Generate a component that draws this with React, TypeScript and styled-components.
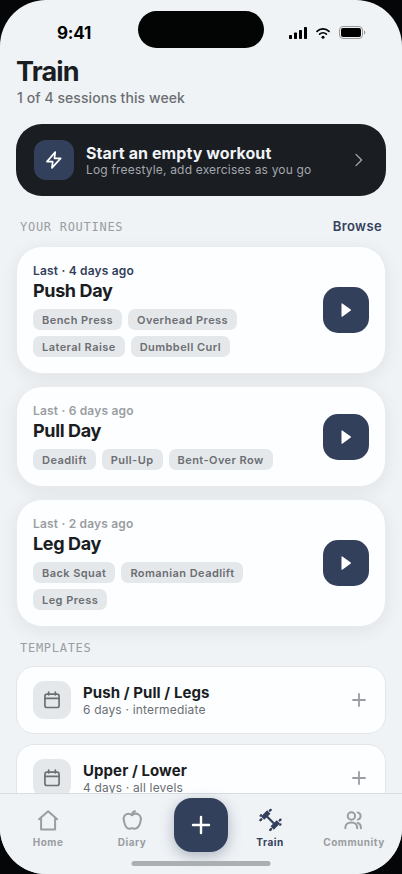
import React from 'react';
import styled, { createGlobalStyle } from 'styled-components';

const color = {
  page: '#eff3f6',
  ink: '#1a1d22',
  navy: '#33405c',
  muted: '#6b6e72',
  faint: '#9a9da1',
  chip: '#e5e8eb',
  line: '#e3e6e9',
  card: '#fdfeff',
};

const GlobalStyle = createGlobalStyle`
  *, *::before, *::after { box-sizing: border-box; }
  html, body { margin: 0; background: #050607; }
  body { font-family: Inter, "Liberation Sans", sans-serif; color: ${color.ink}; }
  h1, h2, h3, p, ul { margin: 0; padding: 0; }
  ul { list-style: none; }
  button { font: inherit; color: inherit; border: 0; padding: 0; cursor: pointer; }
  a { text-decoration: none; color: inherit; }
  svg { display: block; flex: none; }
`;

const Screen = styled.div`
  display: flex;
  flex-direction: column;
  height: 100vh;
  overflow: hidden;
  border-radius: 46px;
  background: ${color.page};
`;

const StatusBar = styled.header`
  display: grid;
  grid-template-columns: 1fr 126px 1fr;
  align-items: start;
  flex: none;
  padding-top: 11px;
  height: 56px;
`;

const Clock = styled.time`
  padding: 11px 0 0 10px;
  text-align: center;
  font-size: 17px;
  line-height: 22px;
  font-weight: 700;
  letter-spacing: -0.01em;
  color: #000;
`;

const Island = styled.div`
  height: 37px;
  border-radius: 19px;
  background: #030504;
`;

const Signals = styled.div`
  display: flex;
  align-items: center;
  gap: 8px;
  padding: 15px 0 0 25px;
`;

const Content = styled.main`
  flex: 1;
  min-height: 0;
  overflow-y: auto;
  scrollbar-width: none;
  padding: 0 16px 24px;
`;

const PageTitle = styled.h1`
  font-size: 27px;
  line-height: 32px;
  font-weight: 700;
  letter-spacing: -0.03em;
`;

const PageNote = styled.p`
  margin-top: 1px;
  padding-left: 1px;
  font-size: 14px;
  line-height: 18px;
  font-weight: 500;
  letter-spacing: 0.005em;
  color: ${color.muted};
`;

const StartButton = styled.button`
  display: flex;
  align-items: center;
  gap: 12px;
  width: 100%;
  margin-top: 17px;
  padding: 16px 18px;
  border-radius: 26px;
  background: ${color.ink};
  color: ${color.page};
  text-align: left;
`;

const StartIcon = styled.span`
  display: grid;
  place-items: center;
  width: 40px;
  height: 40px;
  border-radius: 12px;
  background: ${color.navy};
  color: #fff;
`;

const Copy = styled.span`
  display: flex;
  flex-direction: column;
  flex: 1;
  min-width: 0;
`;

const StartTitle = styled.span`
  font-size: 16px;
  line-height: 20px;
  font-weight: 700;
  letter-spacing: 0.005em;
`;

const StartNote = styled.span`
  font-size: 12px;
  line-height: 14px;
  letter-spacing: 0.015em;
  color: #a3a7ad;
`;

const SectionHead = styled.div<{ $top: number }>`
  display: flex;
  align-items: center;
  justify-content: space-between;
  margin-top: ${(p) => p.$top}px;
  padding: 0 4px;
  min-height: 20px;
`;

const SectionTitle = styled.h2`
  padding-top: 2px;
  font-family: "DejaVu Sans Mono", monospace;
  font-size: 12px;
  line-height: 14px;
  font-weight: 400;
  letter-spacing: 0.06em;
  color: ${color.faint};
  text-transform: uppercase;
`;

const BrowseLink = styled.a`
  font-size: 13px;
  line-height: 16px;
  font-weight: 600;
  letter-spacing: 0.03em;
  color: ${color.navy};
`;

const List = styled.ul<{ $gap: number; $top: number }>`
  display: flex;
  flex-direction: column;
  gap: ${(p) => p.$gap}px;
  margin-top: ${(p) => p.$top}px;
`;

const RoutineCard = styled.li`
  display: flex;
  align-items: center;
  gap: 12px;
  padding: 16px;
  border: 1px solid #e9ecef;
  border-radius: 26px;
  background: ${color.card};
  box-shadow: 0 4px 18px rgba(26, 29, 34, 0.07);
`;

const RoutineBody = styled.div`
  flex: 1;
  min-width: 0;
`;

const LastDone = styled.p<{ $recent?: boolean }>`
  font-size: 12px;
  line-height: 16px;
  font-weight: 600;
  letter-spacing: 0.015em;
  color: ${(p) => (p.$recent ? color.navy : color.faint)};
`;

const RoutineName = styled.h3`
  font-size: 18px;
  line-height: 24px;
  font-weight: 700;
  letter-spacing: -0.02em;
`;

const Chips = styled.ul`
  display: flex;
  flex-wrap: wrap;
  gap: 6px;
  margin-top: 6px;
`;

const Chip = styled.li`
  padding: 1px 9px 0;
  border-radius: 7px;
  background: ${color.chip};
  font-size: 11px;
  line-height: 20px;
  font-weight: 600;
  letter-spacing: 0.04em;
  color: ${color.muted};
`;

const PlayButton = styled.button`
  display: grid;
  place-items: center;
  flex: none;
  width: 46px;
  height: 46px;
  border-radius: 15px;
  background: ${color.navy};
  color: #fff;
`;

const TemplateCard = styled.li`
  display: flex;
  align-items: center;
  gap: 12px;
  padding: 14px 16px;
  border: 1px solid ${color.line};
  border-radius: 18px;
  background: ${color.card};
`;

const TemplateIcon = styled.span`
  display: grid;
  place-items: center;
  width: 38px;
  height: 38px;
  border-radius: 11px;
  background: ${color.chip};
  color: ${color.muted};
`;

const TemplateName = styled.h3`
  font-size: 15px;
  line-height: 20px;
  font-weight: 700;
  letter-spacing: 0.005em;
`;

const TemplateNote = styled.p`
  font-size: 12px;
  line-height: 14px;
  letter-spacing: 0.015em;
  color: ${color.muted};
`;

const AddButton = styled.button`
  display: grid;
  place-items: center;
  width: 20px;
  height: 20px;
  background: none;
  color: ${color.faint};
`;

const TabBar = styled.nav`
  position: relative;
  display: grid;
  grid-template-columns: 1fr 1fr 54px 1fr 1fr;
  align-items: start;
  flex: none;
  height: 81px;
  padding: 4px 6px 0;
  border-top: 1px solid #d9dde2;
  background: ${color.page};
`;

const Tab = styled.a<{ $active?: boolean }>`
  display: flex;
  flex-direction: column;
  align-items: center;
  gap: 3px;
  padding-top: 10px;
  font-size: 10px;
  line-height: 14px;
  font-weight: 700;
  letter-spacing: 0.05em;
  color: ${(p) => (p.$active ? color.navy : color.faint)};
`;

const NewButton = styled.button`
  display: grid;
  place-items: center;
  width: 54px;
  height: 54px;
  border-radius: 18px;
  background: ${color.navy};
  color: #fff;
  box-shadow: 0 4px 14px rgba(51, 64, 92, 0.35);
`;

const HomeIndicator = styled.div`
  position: absolute;
  left: 50%;
  bottom: 8px;
  width: 139px;
  height: 5px;
  border-radius: 3px;
  background: #acafb2;
  transform: translateX(-50%);
`;

type StrokeProps = { size: number; width?: number; children: React.ReactNode };

const Stroke = ({ size, width = 2, children }: StrokeProps) => (
  <svg
    width={size}
    height={size}
    viewBox="0 0 24 24"
    fill="none"
    stroke="currentColor"
    strokeWidth={width}
    strokeLinecap="round"
    strokeLinejoin="round"
    aria-hidden="true"
  >
    {children}
  </svg>
);

const CellularIcon = () => (
  <svg width="18" height="12" viewBox="0 0 18 12" aria-hidden="true">
    <rect x="0" y="8" width="3" height="4" rx="0.7" />
    <rect x="5" y="5.5" width="3" height="6.5" rx="0.7" />
    <rect x="10" y="3" width="3" height="9" rx="0.7" />
    <rect x="15" y="0" width="3" height="12" rx="0.7" />
  </svg>
);

const WifiIcon = () => (
  <svg width="16" height="12" viewBox="0 0 16 12" fill="none" stroke="#000" strokeLinecap="round" aria-hidden="true">
    <path d="M2 4.4C5.3 1.1 10.7 1.1 14 4.4" strokeWidth="1.7" />
    <path d="M4.6 7.2C6.5 5.4 9.5 5.4 11.4 7.2" strokeWidth="1.6" />
    <circle cx="8" cy="10.3" r="1.5" fill="#000" stroke="none" />
  </svg>
);

const BatteryIcon = () => (
  <svg width="27" height="13" viewBox="0 0 27 13" aria-hidden="true">
    <rect x="0.5" y="0.5" width="23" height="12" rx="3.5" fill="none" stroke="#96999c" />
    <rect x="2" y="2" width="20" height="9" rx="2" />
    <path d="M25 4.5v4c.8-.3 1.3-1.1 1.3-2s-.5-1.7-1.3-2Z" fill="#96999c" />
  </svg>
);

const BoltIcon = () => (
  <Stroke size={20}>
    <path d="M13.5 2.5 3.5 14h7l-1 7.5L20 10h-7.5z" />
  </Stroke>
);

const PlayIcon = () => (
  <svg width="18" height="18" viewBox="0 0 20 20" fill="currentColor" aria-hidden="true">
    <path d="M5 3.2c0-.5.5-.8.9-.5l9.4 6.8c.4.3.4.8 0 1.1l-9.4 6.800c-.4.3-.9 0-.9-.5Z" />
  </svg>
);

const CalendarIcon = () => (
  <Stroke size={20}>
    <rect x="3.5" y="5" width="17" height="16" rx="2.5" />
    <path d="M3.5 10h17M8 2.5V6M16 2.5V6" />
  </Stroke>
);

const PlusIcon = ({ size, width }: { size: number; width: number }) => (
  <Stroke size={size} width={width}>
    <path d="M12 4v16M4 12h16" />
  </Stroke>
);

const HomeIcon = () => (
  <Stroke size={24}>
    <path d="M3 11.2 12.1 3.3l9.1 7.9M5.1 9.7V21.4h14V9.7" />
  </Stroke>
);

const AppleIcon = () => (
  <Stroke size={24}>
    <path d="M12 7.3C10.2 5.7 7.9 5.2 5.900 6.500 3.500 8 3.300 11.600 4.500 15.200c1 3.200 2.600 5.500 4.600 5.500 1.100 0 1.800-.5 2.900-.5s1.800.5 2.900.5c2 0 4.100-2.300 5.200-5.500 1.200-3.600.9-7.200-1.500-8.700-2-1.300-4.800-.8-6.600.8Z" />
    <path d="M12 7c.1-2 1-3.2 3-3.7" />
  </Stroke>
);

const DumbbellIcon = () => (
  <svg width="26" height="24" viewBox="0 0 26 24" fill="none" stroke="currentColor" aria-hidden="true">
    <path d="M9 7.5l9 9" strokeWidth="2.2" />
    <path d="M5.600 10.200l6.200-6.200M15.200 20l6.200-6.200" strokeWidth="4.600" />
    <g strokeLinecap="round">
      <path d="M3.400 12.200l.9-.9M12.900 2.700l.8-.8M13.200 22l.9-.9M22.700 12.500l.8-.8" strokeWidth="2.400" />
      <path d="M3.300 7.800l.8-.8M23 17l.8-.8" strokeWidth="1.800" />
    </g>
  </svg>
);

const PeopleIcon = () => (
  <Stroke size={24}>
    <circle cx="9.4" cy="8" r="3.7" />
    <path d="M3.4 20.3v-.9c0-3 2.4-5 5.9-5s5.9 2 5.9 5v.9M15.7 4.4c1.8.5 2.9 1.9 2.9 3.6s-1.1 3.1-2.9 3.6M15.7 14.9c2 .7 3.2 2.4 3.2 4.5v.9" />
  </Stroke>
);

const routines = [
  { name: 'Push Day', last: '4 days ago', recent: true, moves: ['Bench Press', 'Overhead Press', 'Lateral Raise', 'Dumbbell Curl'] },
  { name: 'Pull Day', last: '6 days ago', recent: false, moves: ['Deadlift', 'Pull-Up', 'Bent-Over Row'] },
  { name: 'Leg Day', last: '2 days ago', recent: false, moves: ['Back Squat', 'Romanian Deadlift', 'Leg Press'] },
];

const templates = [
  { name: 'Push / Pull / Legs', note: '6 days · intermediate' },
  { name: 'Upper / Lower', note: '4 days · all levels' },
];

export default function App() {
  return (
    <>
      <GlobalStyle />
      <Screen>
        <StatusBar>
          <Clock>9:41</Clock>
          <Island />
          <Signals>
            <CellularIcon />
            <WifiIcon />
            <BatteryIcon />
          </Signals>
        </StatusBar>

        <Content>
          <PageTitle>Train</PageTitle>
          <PageNote>1 of 4 sessions this week</PageNote>

          <StartButton type="button">
            <StartIcon>
              <BoltIcon />
            </StartIcon>
            <Copy>
              <StartTitle>Start an empty workout</StartTitle>
              <StartNote>Log freestyle, add exercises as you go</StartNote>
            </Copy>
            <Stroke size={18} width={1.8}>
              <path d="M8 4.5 15.500 12 8 19.500" stroke="#a3a7ad" />
            </Stroke>
          </StartButton>

          <SectionHead $top={20}>
            <SectionTitle>Your routines</SectionTitle>
            <BrowseLink href="#browse">Browse</BrowseLink>
          </SectionHead>
          <List $gap={12} $top={10}>
            {routines.map((r) => (
              <RoutineCard key={r.name}>
                <RoutineBody>
                  <LastDone $recent={r.recent}>Last · {r.last}</LastDone>
                  <RoutineName>{r.name}</RoutineName>
                  <Chips>
                    {r.moves.map((m) => (
                      <Chip key={m}>{m}</Chip>
                    ))}
                  </Chips>
                </RoutineBody>
                <PlayButton type="button" aria-label={`Start ${r.name}`}>
                  <PlayIcon />
                </PlayButton>
              </RoutineCard>
            ))}
          </List>

          <SectionHead $top={10}>
            <SectionTitle>Templates</SectionTitle>
          </SectionHead>
          <List $gap={10} $top={9}>
            {templates.map((t) => (
              <TemplateCard key={t.name}>
                <TemplateIcon>
                  <CalendarIcon />
                </TemplateIcon>
                <Copy as="div">
                  <TemplateName>{t.name}</TemplateName>
                  <TemplateNote>{t.note}</TemplateNote>
                </Copy>
                <AddButton type="button" aria-label={`Add ${t.name}`}>
                  <PlusIcon size={18} width={2.4} />
                </AddButton>
              </TemplateCard>
            ))}
          </List>
        </Content>

        <TabBar aria-label="Main">
          <Tab href="#home">
            <HomeIcon />
            Home
          </Tab>
          <Tab href="#diary">
            <AppleIcon />
            Diary
          </Tab>
          <NewButton type="button" aria-label="New entry">
            <PlusIcon size={24} width={2.4} />
          </NewButton>
          <Tab href="#train" $active aria-current="page">
            <DumbbellIcon />
            Train
          </Tab>
          <Tab href="#community">
            <PeopleIcon />
            Community
          </Tab>
          <HomeIndicator />
        </TabBar>
      </Screen>
    </>
  );
}
